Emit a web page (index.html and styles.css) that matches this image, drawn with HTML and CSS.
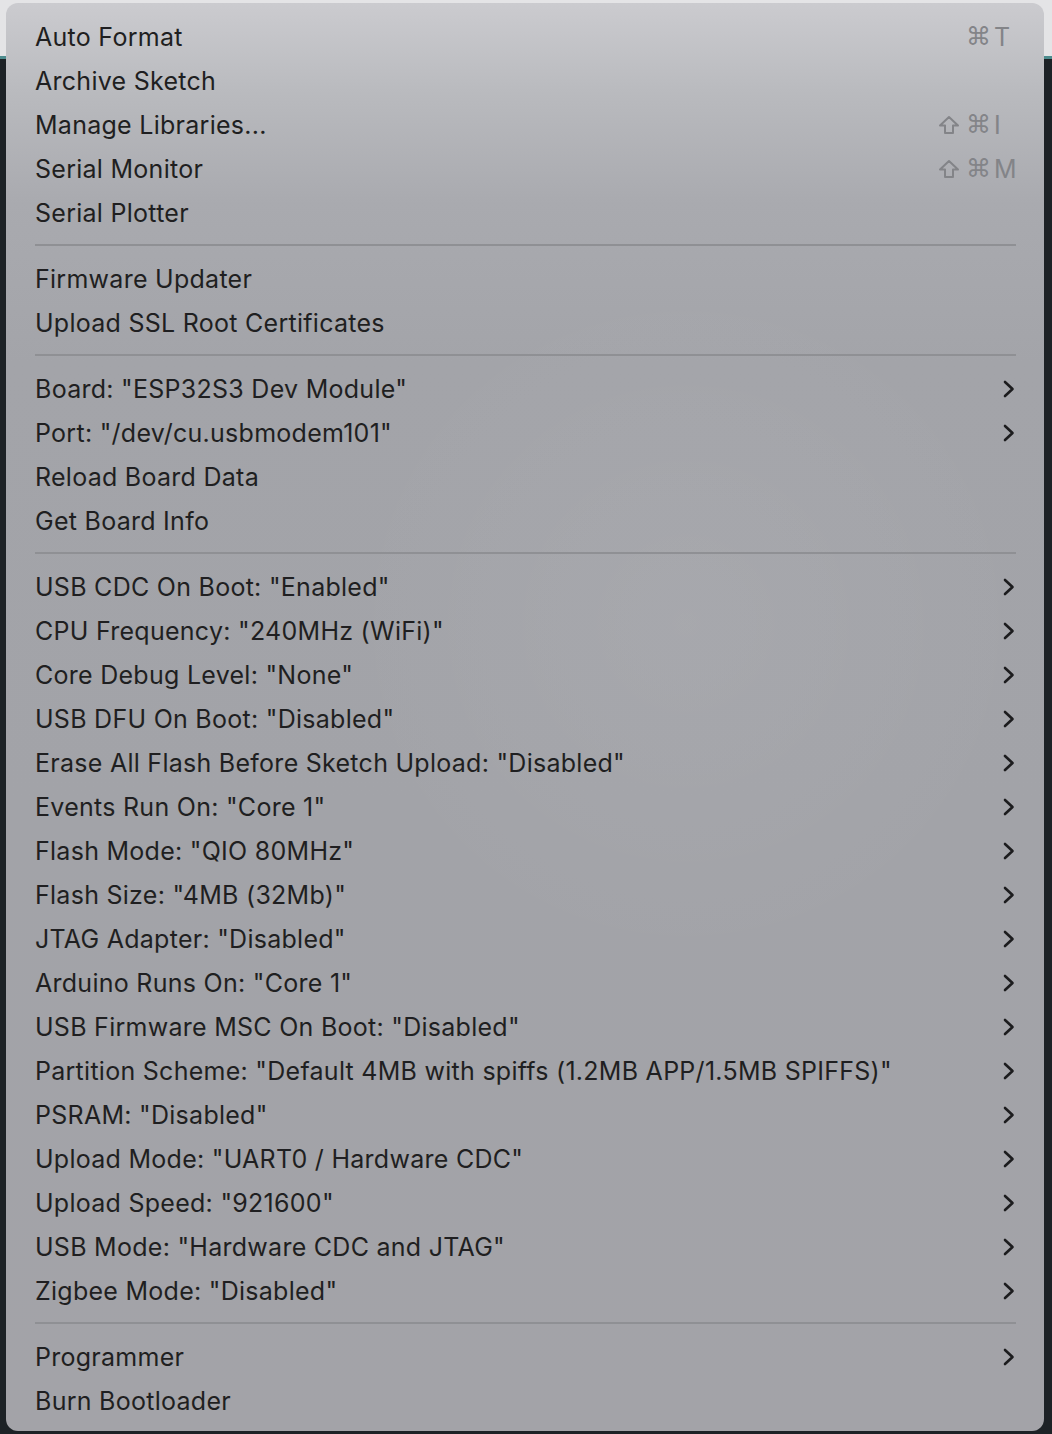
FILE: index.html
```html
<!DOCTYPE html>
<html>
<head>
<meta charset="utf-8">
<link rel="stylesheet" href="styles.css">
</head>
<body>
<div class="backdrop">
  <div class="topband"></div>
  <div class="editor"></div>
</div>
<div class="menu">
  <div class="item"><span class="label">Auto Format</span><span class="keys"><span class="mod"></span><span class="mod">⌘</span><span class="key">T</span></span></div>
  <div class="item"><span class="label">Archive Sketch</span></div>
  <div class="item"><span class="label">Manage Libraries...</span><span class="keys"><span class="mod"><svg class="shift" viewBox="0 0 22 20"><path d="M11 2 L20 10.5 H15 V18 H7 V10.5 H2 Z"/></svg></span><span class="mod">⌘</span><span class="key">I</span></span></div>
  <div class="item"><span class="label">Serial Monitor</span><span class="keys"><span class="mod"><svg class="shift" viewBox="0 0 22 20"><path d="M11 2 L20 10.5 H15 V18 H7 V10.5 H2 Z"/></svg></span><span class="mod">⌘</span><span class="key">M</span></span></div>
  <div class="item"><span class="label">Serial Plotter</span></div>
  <div class="sep"></div>
  <div class="item"><span class="label">Firmware Updater</span></div>
  <div class="item"><span class="label">Upload SSL Root Certificates</span></div>
  <div class="sep"></div>
  <div class="item sub"><span class="label">Board: "ESP32S3 Dev Module"</span><svg class="chev" viewBox="0 0 12 18"><path d="M2 2 L9.5 9 L2 16"/></svg></div>
  <div class="item sub"><span class="label">Port: "/dev/cu.usbmodem101"</span><svg class="chev" viewBox="0 0 12 18"><path d="M2 2 L9.5 9 L2 16"/></svg></div>
  <div class="item"><span class="label">Reload Board Data</span></div>
  <div class="item"><span class="label">Get Board Info</span></div>
  <div class="sep"></div>
  <div class="item sub"><span class="label">USB CDC On Boot: "Enabled"</span><svg class="chev" viewBox="0 0 12 18"><path d="M2 2 L9.5 9 L2 16"/></svg></div>
  <div class="item sub"><span class="label">CPU Frequency: "240MHz (WiFi)"</span><svg class="chev" viewBox="0 0 12 18"><path d="M2 2 L9.5 9 L2 16"/></svg></div>
  <div class="item sub"><span class="label">Core Debug Level: "None"</span><svg class="chev" viewBox="0 0 12 18"><path d="M2 2 L9.5 9 L2 16"/></svg></div>
  <div class="item sub"><span class="label">USB DFU On Boot: "Disabled"</span><svg class="chev" viewBox="0 0 12 18"><path d="M2 2 L9.5 9 L2 16"/></svg></div>
  <div class="item sub"><span class="label">Erase All Flash Before Sketch Upload: "Disabled"</span><svg class="chev" viewBox="0 0 12 18"><path d="M2 2 L9.5 9 L2 16"/></svg></div>
  <div class="item sub"><span class="label">Events Run On: "Core 1"</span><svg class="chev" viewBox="0 0 12 18"><path d="M2 2 L9.5 9 L2 16"/></svg></div>
  <div class="item sub"><span class="label">Flash Mode: "QIO 80MHz"</span><svg class="chev" viewBox="0 0 12 18"><path d="M2 2 L9.5 9 L2 16"/></svg></div>
  <div class="item sub"><span class="label">Flash Size: "4MB (32Mb)"</span><svg class="chev" viewBox="0 0 12 18"><path d="M2 2 L9.5 9 L2 16"/></svg></div>
  <div class="item sub"><span class="label">JTAG Adapter: "Disabled"</span><svg class="chev" viewBox="0 0 12 18"><path d="M2 2 L9.5 9 L2 16"/></svg></div>
  <div class="item sub"><span class="label">Arduino Runs On: "Core 1"</span><svg class="chev" viewBox="0 0 12 18"><path d="M2 2 L9.5 9 L2 16"/></svg></div>
  <div class="item sub"><span class="label">USB Firmware MSC On Boot: "Disabled"</span><svg class="chev" viewBox="0 0 12 18"><path d="M2 2 L9.5 9 L2 16"/></svg></div>
  <div class="item sub"><span class="label">Partition Scheme: "Default 4MB with spiffs (1.2MB APP/1.5MB SPIFFS)"</span><svg class="chev" viewBox="0 0 12 18"><path d="M2 2 L9.5 9 L2 16"/></svg></div>
  <div class="item sub"><span class="label">PSRAM: "Disabled"</span><svg class="chev" viewBox="0 0 12 18"><path d="M2 2 L9.5 9 L2 16"/></svg></div>
  <div class="item sub"><span class="label">Upload Mode: "UART0 / Hardware CDC"</span><svg class="chev" viewBox="0 0 12 18"><path d="M2 2 L9.5 9 L2 16"/></svg></div>
  <div class="item sub"><span class="label">Upload Speed: "921600"</span><svg class="chev" viewBox="0 0 12 18"><path d="M2 2 L9.5 9 L2 16"/></svg></div>
  <div class="item sub"><span class="label">USB Mode: "Hardware CDC and JTAG"</span><svg class="chev" viewBox="0 0 12 18"><path d="M2 2 L9.5 9 L2 16"/></svg></div>
  <div class="item sub"><span class="label">Zigbee Mode: "Disabled"</span><svg class="chev" viewBox="0 0 12 18"><path d="M2 2 L9.5 9 L2 16"/></svg></div>
  <div class="sep"></div>
  <div class="item sub"><span class="label">Programmer</span><svg class="chev" viewBox="0 0 12 18"><path d="M2 2 L9.5 9 L2 16"/></svg></div>
  <div class="item"><span class="label">Burn Bootloader</span></div>
</div>
</body>
</html>
```

FILE: styles.css
```css
html, body {
  margin: 0;
  padding: 0;
}
body {
  width: 1052px;
  height: 1434px;
  overflow: hidden;
  background: #1d2226;
  font-family: Inter, "Noto Sans", "DejaVu Sans", sans-serif;
}
.backdrop {
  display: flex;
  flex-direction: column;
  height: 1434px;
}
.topband {
  height: 56px;
  background: #e4e4e6;
  border-bottom: 3px solid #4d8c8e;
}
.editor {
  flex: 1;
  background: #1d2226;
}
.menu {
  position: absolute;
  left: 6px;
  top: 3px;
  width: 1038px;
  box-sizing: border-box;
  padding: 12px 28px 8px 29px;
  border-radius: 12px;
  background:
    radial-gradient(ellipse 500px 500px at 680px 620px, rgba(255,255,255,0.05), rgba(255,255,255,0) 70%),
    linear-gradient(180deg, #cbcbcf 0px, #b9babe 90px, #a9aaaf 200px, #a3a4a9 360px, #a2a3a8 800px, #a3a3a8 1430px);
  color: #1f1f21;
}
.item {
  height: 44px;
  display: flex;
  align-items: center;
  justify-content: space-between;
  font-size: 25px;
  line-height: 44px;
  letter-spacing: 0.27px;
}
.label {
  white-space: nowrap;
}
.sep {
  height: 2px;
  background: #8f9094;
  margin: 9px 0 11px 0;
}
.chev {
  width: 12px;
  height: 18px;
  margin-right: 1px;
  fill: none;
  stroke: #1c1c1e;
  stroke-width: 2.6;
  stroke-linecap: round;
  stroke-linejoin: round;
}
.keys {
  display: flex;
  align-items: center;
  color: #838488;
  font-size: 25px;
}
.mod {
  width: 28px;
  display: flex;
  align-items: center;
  font-family: "DejaVu Sans", sans-serif;
  font-size: 25px;
}
.shift {
  width: 22px;
  height: 20px;
  fill: none;
  stroke: #838488;
  stroke-width: 2;
  stroke-linejoin: round;
}
.key {
  width: 24px;
  text-align: left;
  margin-right: -2px;
}
```
